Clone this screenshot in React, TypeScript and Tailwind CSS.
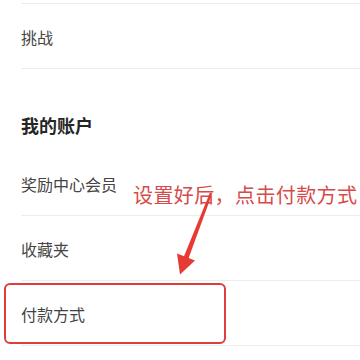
const font = { fontFamily: '"Noto Sans CJK SC", "Noto Sans", sans-serif' };

const Row = ({ label, children }: { label: string; children?: React.ReactNode }) => (
  <div className="relative h-[65px] pl-[21px]">
    <div className="flex h-full items-center border-b border-[#ececec] pt-[1px] text-[16px] leading-none text-[#444]">
      <span>{label}</span>
    </div>
    {children}
  </div>
);

const Arrow = () => (
  <svg
    className="absolute left-[170px] top-[188px]"
    width="50"
    height="90"
    viewBox="0 0 50 90"
  >
    <polygon points="40,4.6 42.2,5.4 18.3,70.9 13.7,69.1" fill="#e63a32" />
    <polygon points="7,65.5 25,72.5 10,86.5" fill="#e63a32" />
  </svg>
);

export default function App() {
  return (
    <div className="relative h-[360px] w-[360px] overflow-hidden bg-white" style={font}>
      <div className="pl-[21px] pt-[3px]">
        <div className="border-t border-[#ececec]" />
      </div>

      <Row label="挑战" />

      <div className="flex h-[82px] items-end pb-[17px] pl-[21px] text-[18px] font-semibold leading-none text-[#262626]">
        <span>我的账户</span>
      </div>

      <Row label="奖励中心会员" />
      <Row label="收藏夹" />
      <Row label="付款方式">
        <div className="absolute left-[4px] top-[2px] h-[61px] w-[222px] rounded-[6px] border-[2.5px] border-[#dc3f3a]" />
      </Row>

      <div className="absolute left-[133px] top-[185px] whitespace-nowrap text-[20px] leading-[20px] tracking-[0.4px] text-[#d64b4a]">
        设置好后，点击付款方式
      </div>
      <Arrow />
    </div>
  );
}
